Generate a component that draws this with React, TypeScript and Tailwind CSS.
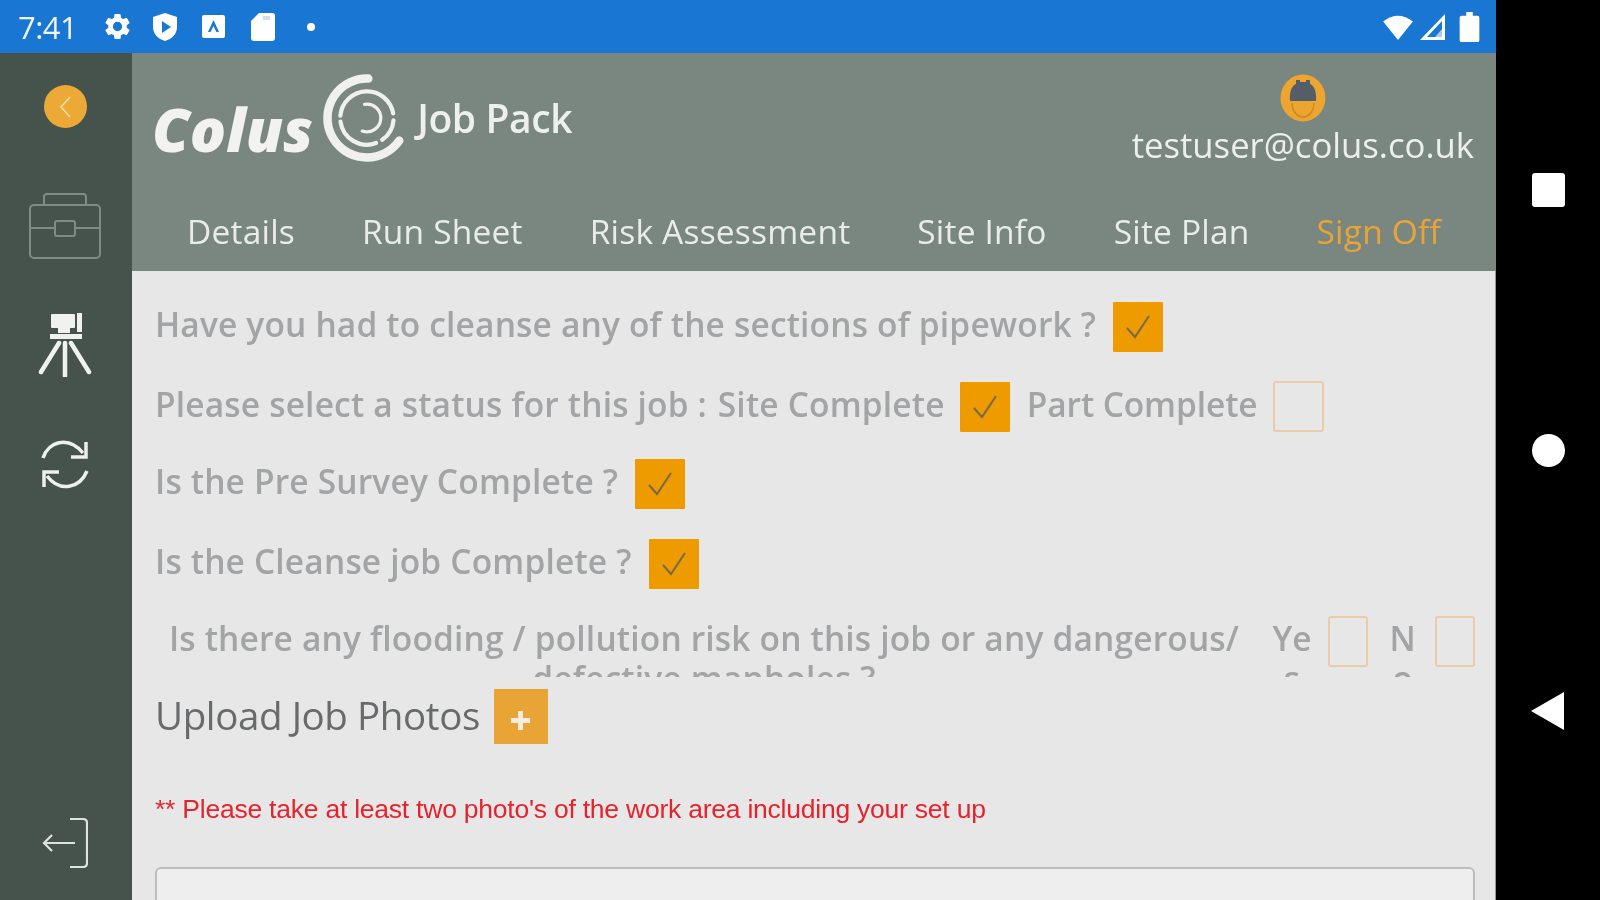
const arc = (cx: number, cy: number, r: number, a0: number, a1: number) => {
  const p = (a: number) => {
    const t = ((a - 90) * Math.PI) / 180;
    return `${(cx + r * Math.cos(t)).toFixed(2)} ${(cy + r * Math.sin(t)).toFixed(2)}`;
  };
  return `M${p(a0)} A${r} ${r} 0 ${a1 - a0 > 180 ? 1 : 0} 1 ${p(a1)}`;
};

function Rings() {
  return (
    <svg width="90" height="96" viewBox="0 0 84 90" fill="none" stroke="#f0f0ee" strokeLinecap="round">
      <path d={arc(41, 45, 37, 125, 362)} strokeWidth="8" />
      <path d={arc(41, 45, 25, 275, 440)} strokeWidth="4" />
      <path d={arc(41, 45, 25, 95, 145)} strokeWidth="4" />
      <path d={arc(41, 45, 25, 160, 262)} strokeWidth="4" />
      <path d={arc(41, 45, 13, 350, 560)} strokeWidth="3" />
    </svg>
  );
}

function Check() {
  return (
    <svg width="30" height="30" viewBox="0 0 30 30" fill="none" stroke="#77694a" strokeWidth="2">
      <path d="M4 16 L12 25 L26 4" />
    </svg>
  );
}

function Box({ on, narrow }: { on?: boolean; narrow?: boolean }) {
  if (on)
    return (
      <div className="flex h-[50px] w-[50px] shrink-0 items-center justify-center rounded-[1px] bg-[#ee9b00]">
        <Check />
      </div>
    );
  return <div className={`h-[51px] shrink-0 rounded-[3px] border-2 border-[#eccbaa] ${narrow ? "w-[40px]" : "w-[51px]"}`} />;
}

const label = "text-[#a2a4a6] text-[33.5px] font-semibold leading-[40px] pb-[6px] whitespace-nowrap tracking-[0.17px]";
const labelTight = "ml-[2px] text-[#a2a4a6] text-[33.5px] font-semibold leading-[40px] pb-[6px] whitespace-nowrap tracking-[-0.1px]";

function Sidebar() {
  return (
    <div className="flex w-[132px] shrink-0 flex-col items-center bg-[#45534c] pt-[32px] pr-[2px] pb-[32px]">
      <div className="flex h-[43px] w-[43px] items-center justify-center rounded-full bg-[#eca935]">
        <svg width="18" height="26" viewBox="0 0 18 26" fill="none" stroke="#f3dcae" strokeWidth="1.6">
          <path d="M14 3 L5 13 L14 23" />
        </svg>
      </div>
      <svg className="mt-[65px] shrink-0" width="72" height="66" viewBox="0 0 72 66" fill="none" stroke="#7f8b85" strokeWidth="2">
        <rect x="1" y="12" width="70" height="53" rx="4" />
        <path d="M15 12 V4 Q15 1 18 1 H54 Q57 1 57 4 V12" />
        <path d="M1 35 H26 M46 35 H71" />
        <rect x="26" y="28" width="20" height="15" rx="2" />
      </svg>
      <svg className="mt-[54px] shrink-0" width="54" height="64" viewBox="0 0 54 64" fill="none" stroke="#f1f2f0">
        <rect x="13" y="1" width="24" height="14" rx="1" fill="#f1f2f0" stroke="none" />
        <rect x="39" y="0" width="5" height="19" fill="#f1f2f0" stroke="none" />
        <rect x="20" y="15" width="12" height="5" fill="#f1f2f0" stroke="none" />
        <rect x="12" y="21" width="32" height="5" fill="#f1f2f0" stroke="none" />
        <path d="M21 30 L3 59 M27 30 V63 M33 30 L51 59" strokeWidth="4.5" strokeLinecap="round" />
      </svg>
      <svg className="mt-[57px] shrink-0" width="50" height="58" viewBox="0 0 50 58" fill="none" stroke="#eef0ed" strokeWidth="3.5">
        <path d="M3 24 C8 8 28 1 43 19" />
        <path d="M46 8 L46 23 L31 23" />
        <path d="M47 37 C40 54 20 59 7 42" />
        <path d="M4 53 L4 38 L19 38" />
      </svg>
      <svg className="mt-auto shrink-0" width="46" height="50" viewBox="0 0 46 50" fill="none" stroke="#dfe3df" strokeWidth="2.2">
        <path d="M28 1 H41 Q45 1 45 5 V45 Q45 49 41 49 H28" />
        <path d="M33 25 H2 M10 17 L2 25 L10 33" />
      </svg>
    </div>
  );
}

function Header() {
  const tabs = ["Details", "Run Sheet", "Risk Assessment", "Site Info", "Site Plan"];
  return (
    <div className="h-[218px] shrink-0 bg-[#7a8781] pl-[20px] pr-[22px]">
      <div className="flex h-[146px] items-start justify-between">
        <div className="flex items-center pt-[14px]">
          <span className="mt-[22px] text-[60px] font-extrabold italic leading-[80px] text-[#f2f2f0]">
            Colus
          </span>
          <div className="ml-[10px]"><Rings /></div>
          <span className="ml-[4px] text-[39px] font-semibold leading-[50px] tracking-[-0.4px] text-[#eef0ee]">Job Pack</span>
        </div>
        <div className="flex flex-col items-center pt-[21px]">
          <svg width="46" height="48" viewBox="0 0 46 48">
            <ellipse cx="23" cy="24" rx="22.5" ry="23.5" fill="#eca52f" />
            <path d="M10 27 C9 16 13 11 16 10 L16 6 H20 V8 H26 V6 H30 V10 C33 11 37 16 36 27 Z" fill="#555d68" />
            <path d="M12 29 C12 38 18 43 23 43 C28 43 34 38 34 29" fill="none" stroke="#c98a2a" strokeWidth="1.5" />
          </svg>
          <span className="mt-[1px] text-[34.7px] leading-[44px] tracking-[-0.01px] text-[#ecefec]">testuser@colus.co.uk</span>
        </div>
      </div>
      <div className="flex items-center gap-[67px] pl-[35px] pt-[11px]">
        {tabs.map((t) => (
          <span key={t} className="text-[33.5px] leading-[42px] tracking-[0.2px] text-[#e9ecea]">{t}</span>
        ))}
        <span className="text-[33.5px] leading-[42px] tracking-[0.2px] text-[#eaa436]">Sign Off</span>
      </div>
    </div>
  );
}

function Content() {
  return (
    <div className="flex min-h-0 flex-1 flex-col overflow-hidden border-r border-[#9a9a9a] bg-[#e7e7e7] pl-[23px] pr-[20px] pt-[31px]">
      <div className="flex shrink-0 items-center gap-[17px]">
        <span className={label}>Have you had to cleanse any of the sections of pipework ?</span>
        <Box on />
      </div>
      <div className="mt-[29px] flex shrink-0 items-center gap-[15px]">
        <span className={label}>
          Please select a status for this job : <span className="ml-[2px]">Site Complete</span>
        </span>
        <Box on />
        <span className={labelTight}>Part Complete</span>
        <Box />
      </div>
      <div className="mt-[27px] flex shrink-0 items-center gap-[17px]">
        <span className={label}>Is the Pre Survey Complete ?</span>
        <Box on />
      </div>
      <div className="mt-[30px] flex shrink-0 items-center gap-[17px]">
        <span className={label}>Is the Cleanse job Complete ?</span>
        <Box on />
      </div>
      <div className="mt-[27px] flex h-[61px] shrink-0 items-start overflow-hidden">
        <div className="w-[1098px] shrink-0 pt-[2px] text-center text-[33.5px] font-semibold leading-[40px] tracking-[0.17px] text-[#a2a4a6]">
          Is there any flooding / pollution risk on this job or any dangerous/ defective manholes ?
        </div>
        <div className="ml-[18px] w-[42px] shrink-0 break-all pt-[2px] text-center text-[33.5px] font-semibold leading-[40px] text-[#a2a4a6]">Yes</div>
        <div className="ml-[15px]"><Box narrow /></div>
        <div className="ml-[21px] w-[27px] shrink-0 break-all pt-[2px] text-center text-[33.5px] font-semibold leading-[40px] text-[#a2a4a6]">No</div>
        <div className="ml-[19px]"><Box narrow /></div>
      </div>
      <div className="mt-[12px] flex shrink-0 items-center gap-[14px]">
        <span className="pb-[4px] text-[38.5px] leading-[48px] tracking-[-0.4px] text-[#686a6b]">Upload Job Photos</span>
        <div className="flex h-[55px] w-[54px] items-center justify-center bg-[#e8a435] pt-[8px]">
          <svg width="23" height="23" viewBox="0 0 24 24" fill="none" stroke="#f5eee0" strokeWidth="5">
            <path d="M12 2 V22 M2 12 H22" />
          </svg>
        </div>
      </div>
      <p className="mt-[47px] shrink-0 font-['Liberation_Sans',sans-serif] text-[26.5px] leading-[36px] tracking-[-0.23px] text-[#e5232d]">
        ** Please take at least two photo's of the work area including your set up
      </p>
      <div className="mt-[40px] h-[80px] shrink-0 rounded-[6px] border-2 border-[#bdbdbd] bg-[#eeeeee]" />
    </div>
  );
}

function StatusBar() {
  return (
    <div className="flex h-[53px] shrink-0 items-center bg-[#1976d2] pl-[18px] text-white">
      <span className="w-[84px] text-[31px] leading-[40px] tracking-[-0.5px] text-[#f0f5fb]">7:41</span>
      <svg width="31" height="31" viewBox="0 0 24 24" fill="white">
        <path d="M19.14 12.94c.04-.3.06-.61.06-.94s-.02-.64-.07-.94l2.03-1.58a.49.49 0 0 0 .12-.61l-1.92-3.32a.49.49 0 0 0-.59-.22l-2.39.96a7 7 0 0 0-1.62-.94l-.36-2.54a.48.48 0 0 0-.48-.41h-3.84a.48.48 0 0 0-.47.41l-.36 2.54c-.59.24-1.13.57-1.62.94l-2.39-.96a.49.49 0 0 0-.59.22L2.74 8.87a.48.48 0 0 0 .12.61l2.03 1.58c-.05.3-.09.63-.09.94s.02.64.07.94l-2.03 1.58a.49.49 0 0 0-.12.61l1.92 3.32c.12.22.37.29.59.22l2.39-.96c.5.38 1.03.7 1.62.94l.36 2.54c.05.24.24.41.48.41h3.84c.24 0 .44-.17.47-.41l.36-2.54a7 7 0 0 0 1.62-.94l2.39.96c.22.08.47 0 .59-.22l1.92-3.32a.48.48 0 0 0-.12-.61zM12 15.6a3.6 3.6 0 1 1 0-7.2 3.6 3.6 0 0 1 0 7.2z" />
      </svg>
      <svg className="ml-[19px]" width="26" height="30" viewBox="0 0 26 30">
        <path d="M13 1 L25 5 V15 C25 22 20 27 13 29 C6 27 1 22 1 15 V5 Z" fill="white" />
        <path d="M10 9 L19 15 L10 21 Z" fill="#1976d2" />
      </svg>
      <svg className="ml-[24px]" width="23" height="23" viewBox="0 0 23 23">
        <rect width="23" height="23" rx="2" fill="white" />
        <path d="M11.5 5 L17 17 H14.5 L11.5 11 L8.5 17 H6 Z" fill="#1976d2" />
      </svg>
      <svg className="ml-[25px]" width="26" height="30" viewBox="0 0 26 30">
        <path d="M9 1 H22 Q25 1 25 4 V26 Q25 29 22 29 H4 Q1 29 1 26 V9 Z" fill="white" />
        <rect x="13" y="4" width="7" height="4" fill="#cfe0f3" />
      </svg>
      <div className="ml-[31px] h-[8px] w-[8px] rounded-full bg-white" />
      <div className="flex-1" />
      <svg width="30" height="26" viewBox="0 0 32 28" className="mr-[6px]">
        <path d="M0 8 Q16 -4 32 8 L16 28 Z" fill="white" />
      </svg>
      <svg width="26" height="28" viewBox="0 0 26 28" className="mr-[14px]">
        <path d="M26 1 V27 H1 Z M23 8 L8 24 H23 Z" fill="white" fillRule="evenodd" />
        <path d="M16 24 L23 16 V24 Z" fill="#a9cbee" />
      </svg>
      <svg width="21" height="30" viewBox="0 0 21 32" className="mr-[16px]">
        <path d="M7 0 H14 V4 H19 Q21 4 21 6 V30 Q21 32 19 32 H2 Q0 32 0 30 V6 Q0 4 2 4 H7 Z" fill="white" />
      </svg>
    </div>
  );
}

function NavBar() {
  return (
    <div className="flex flex-1 flex-col items-center bg-black pt-[173px]">
      <div className="h-[34px] w-[33px] rounded-[3px] bg-white" />
      <div className="mt-[227px] h-[33px] w-[33px] rounded-full bg-white" />
      <svg className="ml-[-1px] mt-[225px]" width="33" height="38" viewBox="0 0 33 38">
        <path d="M0 19 L33 0 V38 Z" fill="white" />
      </svg>
    </div>
  );
}

export default function App() {
  return (
    <div className="flex h-[900px] w-[1600px] overflow-hidden bg-black font-['Open_Sans',sans-serif] blur-[0.6px]">
      <div className="flex h-full w-[1496px] shrink-0 flex-col">
        <StatusBar />
        <div className="flex min-h-0 flex-1">
          <Sidebar />
          <div className="flex min-w-0 flex-1 flex-col">
            <Header />
            <Content />
          </div>
        </div>
      </div>
      <NavBar />
    </div>
  );
}
